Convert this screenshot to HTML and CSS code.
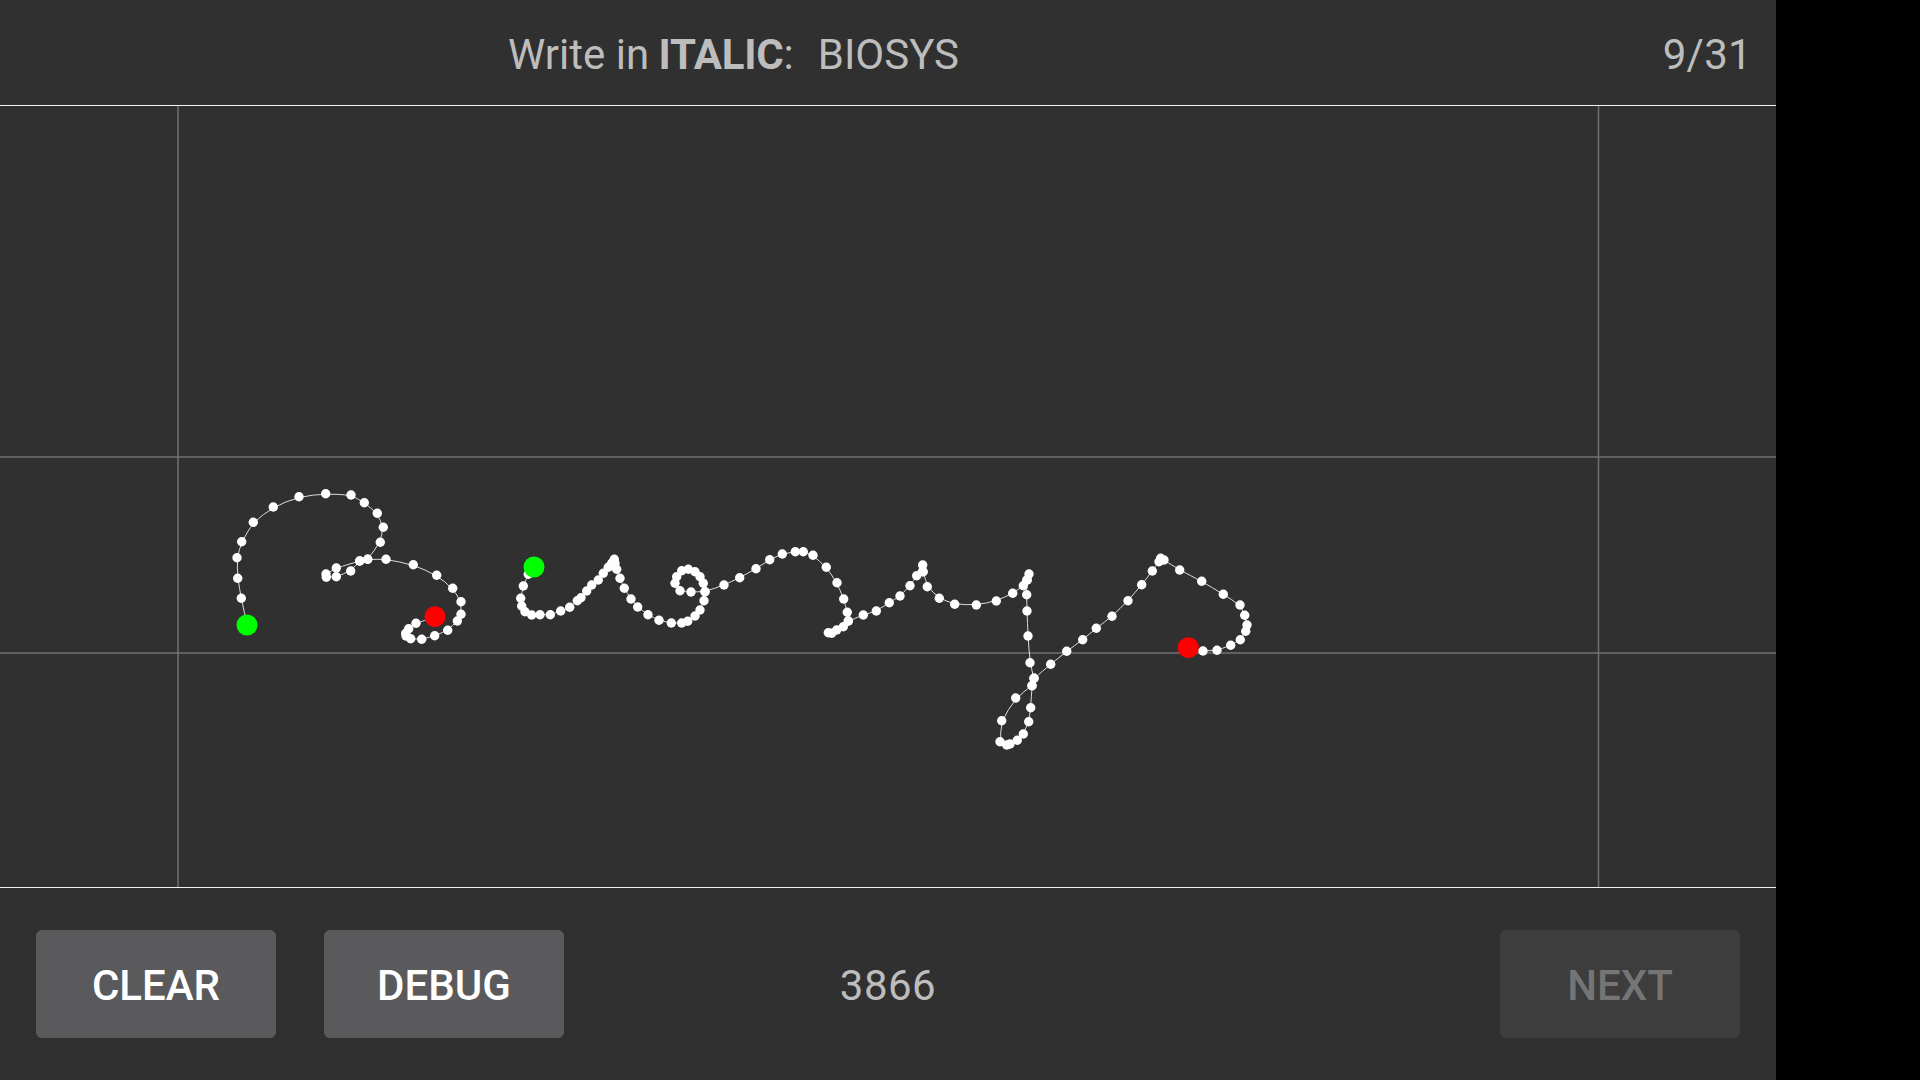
FILE: index.html
```html
<!DOCTYPE html>
<html lang="en">
<head>
  <meta charset="UTF-8">
  <title>Handwriting capture</title>
  <link rel="stylesheet" href="styles.css">
</head>
<body>
  <div class="screen">
    <div class="top-bar">
      <div class="prompt">Write in <b>ITALIC</b>:<span class="word">BIOSYS</span></div>
      <div class="counter">9/31</div>
    </div>

    <div class="pad">
      <svg id="ink" class="ink" width="1776" height="781" viewBox="0 106 1776 781"></svg>
    </div>

    <div class="bottom-bar">
      <button class="btn">CLEAR</button>
      <button class="btn">DEBUG</button>
      <div class="score">3866</div>
      <button class="btn btn-off">NEXT</button>
    </div>
  </div>

  <script src="app.js"></script>
</body>
</html>
```

FILE: styles.css
```css
html, body {
  margin: 0;
  height: 100%;
  background: #000;
}

.screen {
  width: 1776px;
  height: 1080px;
  display: flex;
  flex-direction: column;
  background: #303030;
  color: #bdbdbd;
  font-family: Roboto, "Liberation Sans", sans-serif;
  font-size: 42px;
}

.top-bar {
  height: 105px;
  display: flex;
  align-items: center;
  justify-content: space-between;
  padding: 4px 24px 0 508px;
  box-sizing: border-box;
}

.prompt b {
  font-weight: 700;
  letter-spacing: -0.2px;
  margin-left: -1px;
}

.word {
  margin-left: 24px;
}

.counter {
  letter-spacing: 0.3px;
}

.pad {
  height: 781px;
  border-top: 1px solid #f0f0f0;
  border-bottom: 1px solid #f0f0f0;
}

.ink {
  display: block;
}

.bottom-bar {
  flex: 1;
  display: flex;
  align-items: center;
  gap: 48px;
  padding: 0 36px;
}

.btn {
  width: 240px;
  height: 108px;
  padding: 2px 0 0;
  border: none;
  border-radius: 6px;
  background: #5a5a5c;
  color: #fff;
  font-family: inherit;
  font-size: 42px;
  font-weight: 500;
}

.btn-off {
  background: #3d3d3d;
  color: #757575;
}

.score {
  flex: 1;
  text-align: center;
  padding: 2px 288px 0 0;
  letter-spacing: 0.5px;
}
```

FILE: app.js
```js
// Guide lines of the writing pad
const guides = [
  [178, 106, 178, 887],
  [1598.5, 106, 1598.5, 887],
  [0, 457, 1776, 457],
  [0, 653, 1776, 653]
];

// Captured pen strokes, in page pixels
const strokes = [
  [[247,625],[241.3,598.3],[237.7,578.3],[237,557.7],[241.7,541.7],[253.3,522.3],[273.3,507],[299,496.7],
   [325.7,493.7],[351,495],[364.3,502.7],[377.3,513.3],[383.3,527.3],[380.3,542.3],[367.7,559.3],[359.7,561],
   [350.7,571],[336.3,576.7],[326.3,577.3],[326,574],[336.3,568],[359.7,561],[367.7,559.3],[386,559.3],
   [413.3,564.7],[436.7,575.3],[452.7,588.3],[461,601.7],[461,614.3],[457.3,621],[447.7,630.3],[434.7,635.7],
   [421.7,639.3],[410.7,638.7],[406,636],[405.7,633.3],[408.7,628.7],[416,623.3],[435,616.7]],
  [[534,567],[528.3,574.3],[523.3,586],[520.7,598.3],[521.7,606],[525,611.7],[531.7,615],[540,614.7],
   [550.3,614.7],[560.7,611],[569.7,607.3],[577.3,600.7],[581,597.7],[586.7,591],[591.7,585],[598.3,580],
   [603.3,573.3],[608.3,567.3],[611.7,563.3],[614.3,559.3],[615,563.3],[616.7,569.3],[620,578.3],[624.3,588.3],
   [631,599],[637.7,607],[648,614.7],[659,620.3],[671.3,623],[681.7,623],[687.7,621.3],[695,616],
   [700,610],[704,600.7],[705,591.7],[703.3,583.3],[700,576.7],[695,571.7],[688.3,569.3],[681.7,570.7],
   [676.7,576.7],[675,583.3],[680,590.7],[691,592],[705,591.7],[724,585],[739.7,577.7],[756,568.7],
   [769.7,559.7],[782.3,554],[795.3,551.7],[803.3,551.7],[813,555.3],[826.3,567.3],[837,582.7],[843.7,599],
   [847.3,612.3],[848.3,621],[843.3,626.7],[836.7,630],[831.7,633.3],[828.3,632.7],[848.3,621],[863.3,615],
   [876.3,611],[889.3,602.7],[900,596],[910,585.7],[916.7,575.7],[922.3,571.7],[922.7,565],[923.3,571.7],
   [927.3,586.7],[939.3,598.3],[954.7,604.3],[976.3,605],[996.3,601],[1012.7,593.3],[1023.3,585.7],[1027.3,580],
   [1029,574],[1026.7,580],[1026.7,594.7],[1027,611],[1028,636],[1030,662.7],[1034,678.3],[1032,685.7],
   [1030.7,707.7],[1028.7,721.7],[1023.3,734],[1017.3,740.3],[1010,744],[1006.7,745],[1000,741.7],[1001.7,720.7],
   [1015.7,698],[1032,685.7],[1034,678.3],[1050.7,664.3],[1066.7,651.3],[1082.7,639.7],[1096.3,628.3],[1112,616.3],
   [1128,600.7],[1141.7,584.7],[1152.3,571],[1159,561.7],[1160.7,558.3],[1164,560],[1179.7,570],[1201.7,581.3],
   [1223.3,594.3],[1240,605],[1244.7,615.3],[1247,625],[1245.7,631.3],[1240.3,639.7],[1230.7,645.3],[1217,650.3],
   [1203,651],[1188.3,647.7]]
];

const ink = document.getElementById("ink");

function add(tag, attrs) {
  const el = document.createElementNS("http://www.w3.org/2000/svg", tag);
  Object.keys(attrs).forEach(key => el.setAttribute(key, attrs[key]));
  ink.appendChild(el);
}

guides.forEach(g => {
  add("line", { x1: g[0], y1: g[1], x2: g[2], y2: g[3], stroke: "#707070", "stroke-width": 1.5 });
});

strokes.forEach(pts => {
  let d = `M${pts[0][0]} ${pts[0][1]}`;
  for (let i = 1; i < pts.length - 1; i++) {
    const mx = (pts[i][0] + pts[i + 1][0]) / 2;
    const my = (pts[i][1] + pts[i + 1][1]) / 2;
    d += ` Q${pts[i][0]} ${pts[i][1]} ${mx} ${my}`;
  }
  const last = pts[pts.length - 1];
  d += ` L${last[0]} ${last[1]}`;
  add("path", { d: d, fill: "none", stroke: "#ddd", "stroke-width": 1 });
});

strokes.forEach(pts => {
  pts.forEach(p => add("circle", { cx: p[0], cy: p[1], r: 4.7, fill: "#fff" }));
  const first = pts[0];
  const last = pts[pts.length - 1];
  add("circle", { cx: first[0], cy: first[1], r: 10.5, fill: "#0f0" });
  add("circle", { cx: last[0], cy: last[1], r: 10.5, fill: "#f00" });
});
```
